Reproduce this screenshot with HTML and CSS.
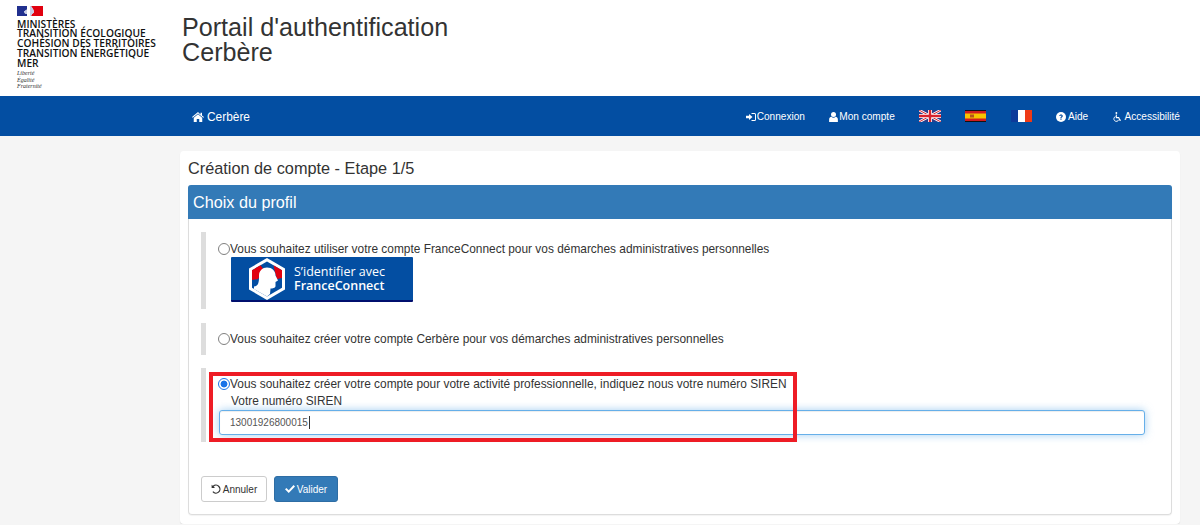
FILE: index.html
```html
<!DOCTYPE html>
<html lang="fr">
<head>
  <meta charset="utf-8">
  <title>Portail d'authentification Cerbère</title>
  <link rel="stylesheet" href="styles.css">
</head>
<body>

  <header class="top">
    <div class="logo">
      <svg class="logo-flag" viewBox="0 0 26 10">
        <path d="M0 0h10v3.500L7 5.500l1 2 2 .5v2H0z" fill="#21308f"/>
        <path d="M14 0h12v10H14l1-2 2-1.500-.5-2.500-1-1.500z" fill="#e1000f"/>
        <path d="M10 3.500 7 5.500l1 2 2 .5zM14 0l1.500 2 1 2 .5 2.500L15 8l-1 2h-1V0z" fill="#c8cde6"/>
      </svg>
      <div class="logo-name">MINISTÈRES<br>TRANSITION ÉCOLOGIQUE<br>COHÉSION DES TERRITOIRES<br>TRANSITION ÉNERGÉTIQUE<br>MER</div>
      <div class="logo-motto">Liberté<br>Égalité<br>Fraternité</div>
    </div>
    <h1>Portail d'authentification<br>Cerbère</h1>
  </header>

  <nav class="navbar">
    <a class="brand" href="#">
      <svg class="icon-home" viewBox="0 0 24 20"><path d="M12 0 0 10.200l1.300 1.500L12 2.800l10.700 8.900 1.300-1.500-4-3.400V1.500h-3v3.300zM12 4.600 3.500 11.600V20h6v-6h5v6h6v-8.400z" fill="#fff"/></svg>
      Cerbère
    </a>
    <div class="nav-right">
      <a class="nav-item nav-tight" href="#">
        <svg class="icon" viewBox="0 0 20 16"><path d="M0 5.500h6V2l7 6-7 6v-3.500H0zM11 0h6a3 3 0 0 1 3 3v10a3 3 0 0 1-3 3h-6v-2h6a1 1 0 0 0 1-1V3a1 1 0 0 0-1-1h-6z" fill="#fff"/></svg>
        Connexion
      </a>
      <a class="nav-item nav-tight" href="#">
        <svg class="icon icon-user" viewBox="0 0 14 16"><circle cx="7" cy="4" r="4" fill="#fff"/><path d="M0 16v-4c0-3 2-4.500 3.500-4.500C4.500 8.500 5.700 9 7 9s2.500-.5 3.500-1.500C12 7.500 14 9 14 12v4z" fill="#fff"/></svg>
        Mon compte
      </a>
      <svg class="flag flag-uk" viewBox="0 0 22 12">
        <rect width="22" height="12" fill="#2b3f8c"/>
        <path d="M0 0l22 12M22 0 0 12" stroke="#fff" stroke-width="2.600"/>
        <path d="M0 0l22 12M22 0 0 12" stroke="#d8242e" stroke-width="1"/>
        <path d="M11 0v12M0 6h22" stroke="#fff" stroke-width="4"/>
        <path d="M11 0v12M0 6h22" stroke="#d8242e" stroke-width="2.400"/>
      </svg>
      <svg class="flag" viewBox="0 0 21 12">
        <rect width="21" height="12" fill="#111"/>
        <rect y="1" width="21" height="10" fill="#d01c1f"/>
        <rect y="3.500" width="21" height="5" fill="#f6c400"/>
        <rect x="5" y="4.500" width="4" height="3" fill="#b5541c"/>
      </svg>
      <svg class="flag" viewBox="0 0 21 12">
        <rect width="7" height="12" fill="#0d3a9a"/>
        <rect x="7" width="7" height="12" fill="#fff"/>
        <rect x="14" width="7" height="12" fill="#ee3a16"/>
      </svg>
      <a class="nav-item" href="#">
        <svg class="icon" viewBox="0 0 16 16"><circle cx="8" cy="8" r="8" fill="#fff"/><path d="M5.200 6.200C5.400 4.600 6.600 3.800 8.100 3.800c1.600 0 2.800 1 2.800 2.400 0 2.100-2.100 2-2.100 3.400H7c0-2.500 2-2.400 2-3.300 0-.5-.4-.9-1-.9s-1 .4-1.200 1zM7 10.500h1.900v1.900H7z" fill="#034ea2"/></svg>
        Aide
      </a>
      <a class="nav-item" href="#">
        <svg class="icon" viewBox="0 0 14 16"><circle cx="6" cy="1.500" r="1.500" fill="#fff"/><path d="M5.900 4v5h3.800l2 4.300 1.500-.6" fill="none" stroke="#fff" stroke-width="1.700"/><path d="M4.500 7.300A4 4 0 1 0 9.800 12.300" fill="none" stroke="#fff" stroke-width="1.500"/></svg>
        Accessibilité
      </a>
    </div>
  </nav>

  <main class="card">
    <h2>Création de compte - Etape 1/5</h2>

    <section class="panel">
      <div class="panel-heading">Choix du profil</div>
      <form class="panel-body">

        <div class="choice choice-fc">
          <label class="choice-label"><input type="radio" name="profil">Vous souhaitez utiliser votre compte FranceConnect pour vos démarches administratives personnelles</label>
          <a class="fc-button" href="#">
            <svg class="fc-logo" viewBox="0 0 36 42">
              <path d="M18 0 36 10.500v21L18 42 0 31.500v-21z" fill="#fff"/>
              <path d="M18 3.500 33 12.200v17.600L18 38.500 3 29.800V12.200z" fill="#034ea2"/>
              <path d="M3 12.200 11.500 7.300 15 12 9 21l-6 1z" fill="#e1000f"/>
              <path d="M33 12.200 24.500 7.300 26 14l2 7 5-1z" fill="#e1000f"/>
              <path d="M18 9.500c5 0 8.500 3.500 8.500 8l2.500 5-2.500 1.500v4c0 2-3 2.500-5 2.500L21 36l-3 2.500L5 31v-2.500c2-.2 3-1 4-2.500 1-2.500 1-5 1-8.500 0-4.500 3.500-8 8-8z" fill="#fff"/>
            </svg>
            <span class="fc-text">S’identifier avec<br><b>FranceConnect</b></span>
          </a>
        </div>

        <div class="choice">
          <label class="choice-label"><input type="radio" name="profil">Vous souhaitez créer votre compte Cerbère pour vos démarches administratives personnelles</label>
        </div>

        <div class="choice">
          <label class="choice-label"><input type="radio" name="profil" checked>Vous souhaitez créer votre compte pour votre activité professionnelle, indiquez nous votre numéro SIREN</label>
          <label class="siren-label" for="siren">Votre numéro SIREN</label>
          <div class="siren-field">
            <input class="siren-input" id="siren" type="text" value="13001926800015">
            <span class="caret"></span>
          </div>
          <div class="highlight"></div>
        </div>

        <div class="actions">
          <button class="btn btn-default" type="reset">
            <svg class="icon" viewBox="0 0 16 16"><path d="M1 1v5.500h5.500L4.300 4.300A5.300 5.300 0 1 1 3.800 11.500l-1.500 1.300A7.300 7.300 0 1 0 2.900 2.900z" fill="#333"/></svg>
            Annuler
          </button>
          <button class="btn btn-primary" type="submit">
            <svg class="icon" viewBox="0 0 16 13"><path d="M0 7l2.300-2.300L6 8.400 13.700 0 16 2.300 6 13z" fill="#fff"/></svg>
            Valider
          </button>
        </div>

      </form>
    </section>
  </main>

</body>
</html>
```

FILE: styles.css
```css
* {
  box-sizing: border-box;
}

body {
  margin: 0;
  background: #f5f5f5;
  color: #333;
  font: 11.900px/18px "Liberation Sans", Arial, sans-serif;
}

a {
  color: inherit;
  text-decoration: none;
}

/* header */

.top {
  display: flex;
  height: 96px;
  background: #fff;
}

.logo {
  width: 182px;
  padding: 6px 0 0 17px;
}

.logo-flag {
  display: block;
  width: 26px;
  height: 10px;
}

.logo-name {
  margin-top: 3.500px;
  color: #111;
  font: 600 10.200px/9.800px "Open Sans", sans-serif;
}

.logo-motto {
  margin-top: 2px;
  color: #333;
  font: italic 6px/6.300px "Liberation Serif", serif;
}

.top h1 {
  margin: 15px 0 0;
  color: #333;
  font-size: 25.150px;
  font-weight: normal;
  line-height: 25px;
}

/* nav bar */

.navbar {
  display: flex;
  align-items: center;
  height: 40px;
  padding: 0 20px 0 192px;
  background: #034ea2;
  color: #fff;
}

.brand {
  display: flex;
  align-items: center;
  gap: 3px;
  padding-top: 2px;
  font-size: 11.900px;
}

.icon-home {
  width: 12px;
  height: 10px;
}

.nav-right {
  display: flex;
  align-items: center;
  gap: 24.300px;
  margin-left: auto;
  font-size: 10.100px;
}

.nav-item {
  display: flex;
  align-items: center;
  gap: 2px;
  padding-top: 2px;
}

.nav-tight {
  gap: 1px;
}

.icon {
  width: 10px;
  height: 10px;
}

.icon-user {
  width: 9px;
}

.flag {
  width: 21px;
  height: 12px;
}

.flag-uk {
  width: 22px;
}

/* main card */

.card {
  width: 1000px;
  height: 373px;
  margin: 15px 0 0 180px;
  padding: 7px 8px;
  border-radius: 4px;
  background: #fff;
  box-shadow: 0 1px 1px rgba(0, 0, 0, .1);
}

.card h2 {
  margin: 0 0 7px;
  font-size: 16.300px;
  font-weight: normal;
  line-height: 20px;
}

.panel {
  height: 330px;
  border: 1px solid #ddd;
  border-top: 0;
  border-radius: 4px;
  box-shadow: 0 1px 1px rgba(0, 0, 0, .05);
}

.panel-heading {
  height: 34px;
  margin: 0 -1px;
  padding: 8px 5px;
  border-radius: 3px 3px 0 0;
  background: #337ab7;
  color: #fff;
  font-size: 16.200px;
}

.panel-body {
  padding: 13.400px 26px 0 12px;
}

/* choices */

.choice {
  position: relative;
  margin-bottom: 13.300px;
  padding: 7px 0 7px 12px;
  border-left: 5px solid #ddd;
}

.choice-label {
  display: block;
  height: 18px;
}

.choice-fc .choice-label {
  padding-top: 1px;
}

.choice-label input {
  appearance: none;
  width: 12px;
  height: 12px;
  margin: 0;
  border: 1.500px solid #808080;
  border-radius: 50%;
  vertical-align: -2px;
}

.choice-label input:checked {
  border-color: #1a73e8;
  background: radial-gradient(circle, #1a73e8 0 3.200px, #fff 3.700px);
}

.fc-button {
  display: flex;
  align-items: center;
  gap: 9px;
  width: 182px;
  height: 45px;
  margin-left: 13px;
  padding-left: 18px;
  border-bottom: 2px solid #000f6e;
  border-radius: 1px;
  background: #034ea2;
  color: #fff;
}

.fc-logo {
  width: 36px;
  height: 42px;
}

.fc-text {
  font: 12.500px/14px "Open Sans", sans-serif;
}

.fc-text b {
  font-weight: 600;
}

.siren-label {
  display: block;
  padding-left: 13px;
  height: 16px;
  line-height: 16px;
}

.siren-field {
  position: relative;
  margin-top: 1px;
  margin-left: 1px;
}

.siren-input {
  display: block;
  width: 926px;
  height: 25px;
  padding: 0 10px;
  border: 1px solid #66afe9;
  border-radius: 3px;
  outline: 0;
  box-shadow: inset 0 1px 1px rgba(0, 0, 0, .075), 0 0 8px rgba(102, 175, 233, .6);
  color: #555;
  font: 10px "Liberation Sans", Arial, sans-serif;
}

.caret {
  position: absolute;
  top: 6px;
  left: 90px;
  width: 1px;
  height: 13px;
  background: #333;
}

.highlight {
  position: absolute;
  top: 4px;
  left: 3px;
  width: 588px;
  height: 70px;
  border: 4px solid #ee1c25;
}

/* buttons */

.actions {
  display: flex;
  gap: 7px;
  margin-top: 34px;
}

.btn {
  display: flex;
  align-items: center;
  justify-content: center;
  gap: 2px;
  height: 26px;
  padding: 1px 0 0;
  border: 1px solid #ccc;
  border-radius: 3px;
  font: 10px "Liberation Sans", Arial, sans-serif;
}

.btn-default {
  width: 66px;
  background: #fff;
  color: #333;
}

.btn-primary {
  width: 64px;
  border-color: #2e6da4;
  background: #337ab7;
  color: #fff;
}
```
